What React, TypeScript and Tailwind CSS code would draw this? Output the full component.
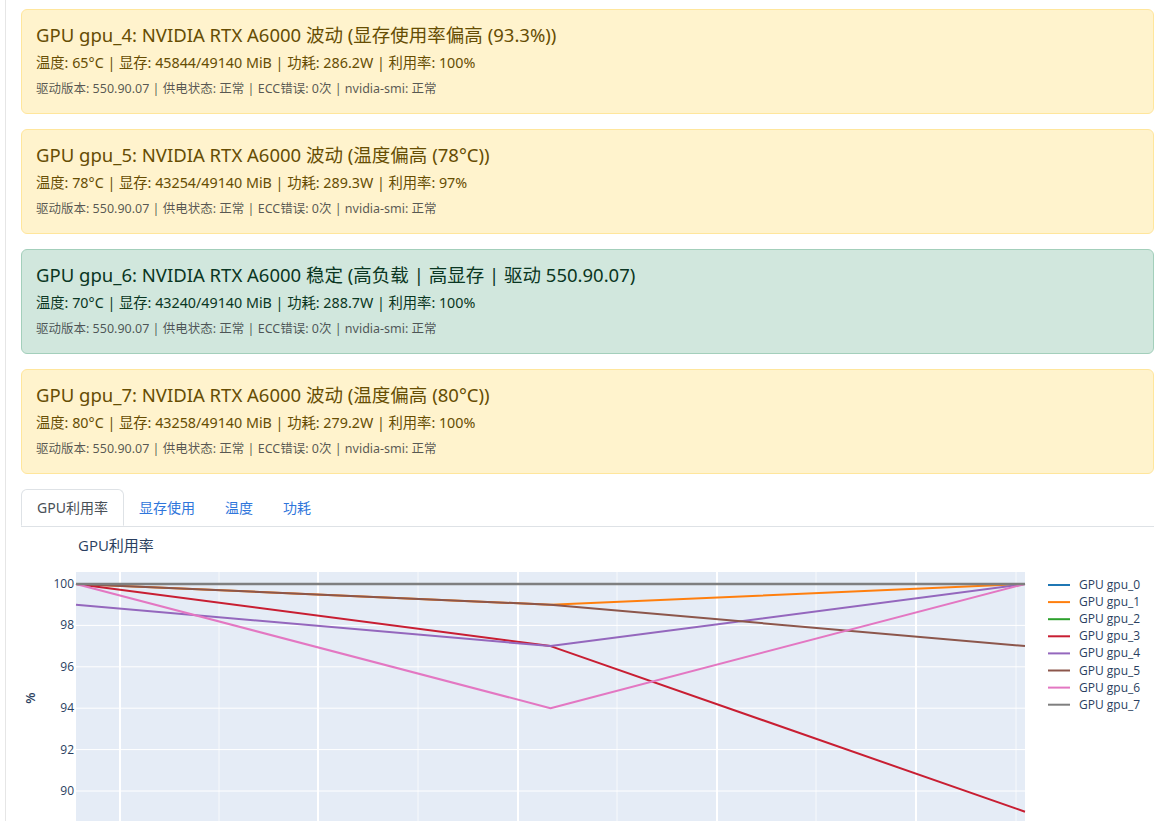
import React from 'react'

type Gpu = {
  id: string
  status: string
  tone: 'warn' | 'ok'
  temp: number
  mem: number
  power: string
  util: number
}

const gpus: Gpu[] = [
  { id: 'gpu_4', status: '波动 (显存使用率偏高 (93.3%))', tone: 'warn', temp: 65, mem: 45844, power: '286.2', util: 100 },
  { id: 'gpu_5', status: '波动 (温度偏高 (78°C))', tone: 'warn', temp: 78, mem: 43254, power: '289.3', util: 97 },
  { id: 'gpu_6', status: '稳定 (高负载 | 高显存 | 驱动 550.90.07)', tone: 'ok', temp: 70, mem: 43240, power: '288.7', util: 100 },
  { id: 'gpu_7', status: '波动 (温度偏高 (80°C))', tone: 'warn', temp: 80, mem: 43258, power: '279.2', util: 100 },
]

const GpuCard = ({ gpu }: { gpu: Gpu }) => {
  const warn = gpu.tone === 'warn'
  return (
    <div
      className={
        warn
          ? 'mb-[15px] rounded-[6px] border border-[#ffe69c] bg-[#fff3cd] px-[14px] pt-[16px] pb-[15px] text-[#664d03]'
          : 'mb-[15px] rounded-[6px] border border-[#a3cfbb] bg-[#d1e7dd] px-[14px] pt-[16px] pb-[15px] text-[#0a3622]'
      }
    >
      <div className="mb-[9px] text-[18.5px] leading-[18px]">
        GPU {gpu.id}: NVIDIA RTX A6000 {gpu.status}
      </div>
      <div className="mb-[7px] text-[14.3px] leading-[20px]">
        温度: {gpu.temp}°C | 显存: {gpu.mem}/49140 MiB | 功耗: {gpu.power}W | 利用率: {gpu.util}%
      </div>
      <div className="text-[12.5px] leading-[18px] text-[rgba(33,37,41,0.75)]">
        驱动版本: 550.90.07 | 供电状态: 正常 | ECC错误: 0次 | nvidia-smi: 正常
      </div>
    </div>
  )
}

const series = [
  { name: 'GPU gpu_0', color: '#1f77b4', v: [100, 100, 100], w: 2 },
  { name: 'GPU gpu_1', color: '#ff7f0e', v: [100, 99, 100], w: 2 },
  { name: 'GPU gpu_2', color: '#2ca02c', v: [100, 100, 100], w: 2 },
  { name: 'GPU gpu_3', color: '#c81e32', v: [100, 97, 89], w: 2 },
  { name: 'GPU gpu_4', color: '#9467bd', v: [99, 97, 100], w: 2 },
  { name: 'GPU gpu_5', color: '#8c564b', v: [100, 99, 97], w: 2 },
  { name: 'GPU gpu_6', color: '#e377c2', v: [100, 94, 100], w: 2 },
  { name: 'GPU gpu_7', color: '#7f7f7f', v: [100, 100, 100], w: 2.6 },
]

const xs = [55, 529.5, 1004]
const yOf = (v: number) => 57 + (100 - v) * 20.7
const majorX = [99, 297, 497, 696, 895]
const minorX = [198, 397, 596, 795, 995]

const UtilChart = () => (
  <svg width="1134" height="340" className="block font-['Open_Sans','Noto_Sans_CJK_SC',sans-serif]">
    <text x="57" y="24" fontSize="15" fill="#2a3f5f">GPU利用率</text>
    <rect x="55" y="45" width="949" height="270" fill="#e5ecf6" />
    {minorX.map((x) => (
      <line key={x} x1={x} x2={x} y1="45" y2="315" stroke="#ffffff" strokeWidth="1" opacity="0.7" />
    ))}
    {majorX.map((x) => (
      <line key={x} x1={x} x2={x} y1="45" y2="315" stroke="#ffffff" strokeWidth="2" />
    ))}
    {[100, 98, 96, 94, 92, 90, 88].map((v) => (
      <line key={v} x1="55" x2="1004" y1={yOf(v)} y2={yOf(v)} stroke="#ffffff" strokeWidth="1" />
    ))}
    {[100, 98, 96, 94, 92, 90].map((v) => (
      <text key={v} x="53" y={yOf(v) + 4} fontSize="12" fill="#2a3f5f" textAnchor="end">{v}</text>
    ))}
    <text
      x="9"
      y="171"
      fontSize="13"
      fontWeight="600"
      fill="#2a3f5f"
      textAnchor="middle"
      dominantBaseline="central"
      transform="rotate(-90 9 171)"
    >
      %
    </text>
    {series.map((s) => (
      <polyline
        key={s.name}
        points={s.v.map((v, i) => `${xs[i]},${yOf(v)}`).join(' ')}
        fill="none"
        stroke={s.color}
        strokeWidth={s.w}
        strokeLinejoin="round"
      />
    ))}
    {series.map((s, i) => {
      const y = 58 + i * 17.1
      return (
        <g key={s.name}>
          <line x1="1027" x2="1049" y1={y} y2={y} stroke={s.color} strokeWidth="2" />
          <text x="1058" y={y + 4} fontSize="12" fill="#2a3f5f">{s.name}</text>
        </g>
      )
    })}
  </svg>
)

const tabs = ['GPU利用率', '显存使用', '温度', '功耗']

export default function App() {
  return (
    <div className="min-h-screen bg-white font-['Noto_Sans','Noto_Sans_CJK_SC',sans-serif]">
      <div className="ml-[5px] border-l border-[#e6e6e6] pl-[15px] pr-[3px] pt-[9px]">
        {gpus.map((g) => (
          <GpuCard key={g.id} gpu={g} />
        ))}
        <div className="flex border-b border-[#dee2e6] text-[14px]">
          {tabs.map((t, i) =>
            i === 0 ? (
              <div
                key={t}
                className="-mb-px flex h-[37px] items-center rounded-t-[6px] border border-[#dee2e6] border-b-white bg-white px-[15px] text-[#495057]"
              >
                {t}
              </div>
            ) : (
              <div key={t} className="flex h-[37px] items-center px-[15px] text-[#2f76db]">
                {t}
              </div>
            )
          )}
        </div>
        <UtilChart />
      </div>
    </div>
  )
}
